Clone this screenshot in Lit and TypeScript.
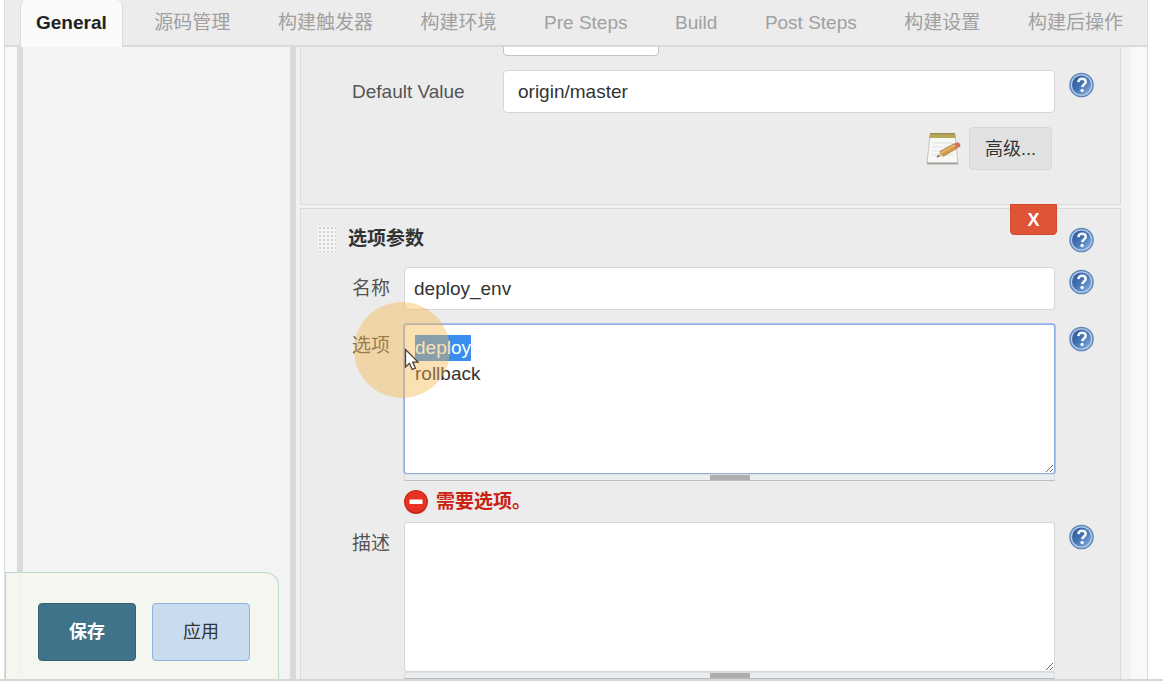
import { LitElement, html, css, svg } from "lit";
import { customElement, property, query } from "lit/decorators.js";
import { classMap } from "lit/directives/class-map.js";

@customElement("help-button")
class HelpButton extends LitElement {
  @property() topic = "";

  static styles = css`
    :host { display: block; width: 26px; height: 26px; }
    .help { display: block; width: 26px; height: 26px; padding: 0; border: 0; background: none; cursor: pointer; }
    .icon { display: block; }
  `;

  render() {
    return html`<button class="help" type="button" aria-label=${"帮助: " + this.topic}>
      <svg class="icon" width="26" height="26" viewBox="0 0 26 26" aria-hidden="true">
        <defs>
          <linearGradient id="g" x1="0" y1="0" x2="1" y2="1">
            <stop offset="0" stop-color="#2c5595" />
            <stop offset="0.5" stop-color="#4374b4" />
            <stop offset="1" stop-color="#8fb6e2" />
          </linearGradient>
        </defs>
        <circle cx="12.500" cy="13" r="12.300" fill="#6187ba" />
        <circle cx="12.500" cy="13" r="10.800" fill="#b4cbe8" />
        <circle cx="12.500" cy="13" r="9.500" fill="url(#g)" />
        <path d="M9.300 10.200c.2-2.300 1.700-3.500 3.800-3.500 2.200 0 3.600 1.200 3.600 3.100 0 2.600-3.300 2.700-3.500 5.400" fill="none" stroke="#f2f7fd" stroke-width="2.600" />
        <circle cx="13.100" cy="18.500" r="1.700" fill="#f2f7fd" />
      </svg>
    </button>`;
  }
}

const notepadIcon = svg`
  <path d="M4 4h25l3 28H1z" fill="#f8f8f6" stroke="#c4c4c0" stroke-width="1" />
  <path d="M1 31.500h31v2H1z" fill="#a5a59f" />
  <path d="M4 2h25l.8 5H3.400z" fill="#b8a85a" />
  <path d="M4 2h25v1.500H4z" fill="#9a8e50" />
  <path d="M6 12h21M6 16h21M5.500 20h22M5 24h23" stroke="#dfe1e2" stroke-width="1" />
  <path d="M10.500 26.500l4-6.500 4 5z" fill="#e0cc92" />
  <path d="M14 20.500L28 12.700l3 4.600-13.500 8z" fill="#d29a48" stroke="#a87b3c" stroke-width=".7" />
  <path d="M15 22l13.800-7.800" stroke="#edc47c" stroke-width="1.200" />
  <path d="M28 12.700l3.300-1.500q3.400.3 3 4.200l-3.300 1.900z" fill="#d4705e" />
  <path d="M10.500 26.500l1.500-2.400 1.700 1.500z" fill="#5d5840" />`;

const tabs = [
  "General", "源码管理", "构建触发器", "构建环境", "Pre Steps",
  "Build", "Post Steps", "构建设置", "构建后操作",
];

@customElement("app-root")
class AppRoot extends LitElement {
  @query("#choices") choices!: HTMLTextAreaElement;

  static styles = css`
    :host {
      display: flex;
      flex-direction: column;
      box-sizing: border-box;
      height: 100vh;
      padding-bottom: 6px;
      background: #fff;
      color: #333;
      font: 19px/26px "Liberation Sans", "Noto Sans CJK SC", sans-serif;
    }
    * { box-sizing: border-box; }
    button, input, textarea, select { font: inherit; color: inherit; margin: 0; }

    .viewport {
      flex: 1;
      min-height: 0;
      display: flex;
      padding: 0 15px 0 4px;
      border-bottom: 2px solid #d6d6d6;
    }
    .frame {
      position: relative;
      flex: 1;
      min-width: 0;
      display: flex;
      flex-direction: column;
      border: solid #dcdcdc;
      border-width: 0 1px;
      background: #f9f9f9;
    }

    .tabs {
      display: flex;
      flex: none;
      justify-content: space-between;
      height: 47px;
      padding: 0 8px 0 15px;
      background: #ececec;
      box-shadow: inset 0 -2px #dadada;
    }
    .tab {
      padding: 10px 16px 0;
      color: #a0a0a0;
      text-decoration: none;
      white-space: nowrap;
    }
    .tab.active {
      padding: 10px 15px 0;
      border: solid #dadada;
      border-width: 0 1px;
      border-radius: 6px 6px 0 0;
      background: #fafafa;
      color: #222;
      font-weight: bold;
    }

    .workspace {
      flex: 1;
      min-height: 0;
      display: flex;
      margin: 0 16px 0 12px;
      overflow: hidden;
    }
    .side {
      flex: none;
      width: 279px;
      border: solid #dadada;
      border-width: 0 6px;
      background: #f3f3f3;
    }
    .form {
      flex: 1;
      min-width: 0;
      padding: 0 10px 0 4px;
      background: #f1f1f1;
    }
    .panel {
      border: 1px solid #dadada;
      padding: 0 25px 0 51px;
      background: #ececec;
    }
    .panel + .panel { margin-top: 3px; }
    .scrolled { margin-top: -35px; padding-bottom: 34px; }
    .row {
      position: relative;
      display: grid;
      grid-template-columns: 52px minmax(0, 1fr) 26px;
      margin-bottom: 14px;
    }
    .wide { grid-template-columns: 151px minmax(0, 1fr) 26px; }
    .row help-button { margin-top: 2px; }
    .label { padding-top: 9px; color: #555; }
    .control { margin-right: 14px; min-width: 0; }
    .text, .area, .pick {
      display: block;
      width: 100%;
      border: 1px solid #d6d6d6;
      border-radius: 4px;
      background: #fff;
    }
    .text { height: 43px; padding: 0 9px; }
    .wide .text { padding: 0 14px; }
    .pick { width: 156px; height: 43px; appearance: none; border-color: #c4c4c4; }
    .area {
      height: 150px;
      padding: 10px;
      border-radius: 3px;
      resize: vertical;
      outline: none;
    }
    .area:focus { border-color: #8fafe2; box-shadow: 0 0 0 1px #a5c0ea; }
    .area::selection { background: #3a8eee; color: #fff; }
    .handle {
      display: flex;
      justify-content: center;
      height: 7px;
      border: 1px solid #ddd;
      border-bottom-color: #bdbdbd;
      background: #ebeef1;
    }
    .handle::before { content: ""; width: 40px; background: #adadad; }

    .advanced {
      display: flex;
      justify-content: flex-end;
      align-items: center;
      gap: 7px;
      margin-right: 43px;
    }
    .notepad { display: block; }
    .more {
      height: 43px;
      padding: 0 15px;
      border: 1px solid #d6d6d6;
      border-radius: 4px;
      background: #e1e1e1;
      font-size: 18px;
    }

    .heading {
      position: relative;
      display: flex;
      align-items: center;
      height: 58px;
      margin-left: -34px;
      padding-top: 2px;
    }
    .grip {
      width: 18px;
      height: 26px;
      margin-right: 12px;
      background: radial-gradient(circle, #cfcfcf 1px, #f5f5f5 1px) 0 0 / 4px 4px;
    }
    .title { flex: 1; margin: 0; font-size: 19px; line-height: 26px; color: #333; }
    .heading help-button { align-self: flex-end; margin-bottom: 14px; }
    .remove {
      position: absolute;
      top: -5px;
      right: 38px;
      width: 47px;
      height: 31px;
      padding: 0;
      border: 1px solid #cf4a2f;
      border-radius: 0 0 4px 4px;
      background: #df5336;
      color: #fff;
      font-size: 18px;
      font-weight: bold;
    }
    .error {
      display: flex;
      align-items: center;
      gap: 8px;
      height: 26px;
      margin: 8px 0 -7px;
      color: #cc2211;
      font-weight: bold;
    }

    .spot {
      position: absolute;
      left: 2px;
      top: -22px;
      width: 96px;
      height: 96px;
      border-radius: 50%;
      background: rgba(246, 180, 75, 0.42);
      pointer-events: none;
    }
    .pointer { position: absolute; left: 52px; top: 24px; pointer-events: none; }

    .actions {
      position: absolute;
      left: 0;
      bottom: 0;
      display: flex;
      gap: 16px;
      padding: 30px 28px 18px 32px;
      border: solid #bfd8ce;
      border-width: 1px 1px 0 1px;
      border-radius: 0 14px 0 0;
      background: rgba(243, 247, 239, 0.94);
    }
    .action {
      width: 98px;
      height: 58px;
      border: 1px solid #8fb4dc;
      border-radius: 4px;
      background: #c9dcef;
      font-size: 18px;
    }
    .save { border-color: #335f71; background: #3f7389; color: #fff; font-weight: bold; }
  `;

  firstUpdated() {
    this.choices.focus({ preventScroll: true });
    this.choices.setSelectionRange(0, 6);
  }

  render() {
    return html`
      <div class="viewport">
        <div class="frame">
          <nav class="tabs">
            ${tabs.map((name, i) => html`<a href="#" class=${classMap({ tab: true, active: i === 0 })}>${name}</a>`)}
          </nav>
          <main class="workspace">
            <div class="side"></div>
            <form class="form">
              <section class="panel scrolled">
                <div class="row wide">
                  <span></span>
                  <div class="control"><select class="pick" aria-label="Parameter Type"></select></div>
                </div>
                <div class="row wide">
                  <label class="label" for="default">Default Value</label>
                  <div class="control"><input class="text" id="default" value="origin/master" /></div>
                  <help-button topic="Default Value"></help-button>
                </div>
                <div class="advanced">
                  <svg class="notepad" width="36" height="36" viewBox="0 0 36 36" aria-hidden="true">${notepadIcon}</svg>
                  <button class="more" type="button">高级...</button>
                </div>
              </section>

              <section class="panel">
                <div class="heading">
                  <span class="grip"></span>
                  <h2 class="title">选项参数</h2>
                  <button class="remove" type="button">X</button>
                  <help-button topic="选项参数"></help-button>
                </div>
                <div class="row">
                  <label class="label" for="name">名称</label>
                  <div class="control"><input class="text" id="name" value="deploy_env" /></div>
                  <help-button topic="名称"></help-button>
                </div>
                <div class="row">
                  <label class="label" for="choices">选项</label>
                  <div class="control">
                    <textarea class="area" id="choices" spellcheck="false" .value=${"deploy\nrollback"}></textarea>
                    <div class="handle"></div>
                    <div class="error" role="alert">
                      <svg width="24" height="24" viewBox="0 0 24 24" aria-hidden="true">
                        <circle cx="12" cy="12" r="12" fill="#c9281b" />
                        <circle cx="12" cy="11.500" r="10.500" fill="#e63323" />
                        <rect x="5.500" y="9.500" width="13" height="4.500" rx=".5" fill="#fff" />
                      </svg>
                      <span>需要选项。</span>
                    </div>
                  </div>
                  <help-button topic="选项"></help-button>
                  <div class="spot"></div>
                  <svg class="pointer" width="16" height="24" viewBox="0 0 16 24" aria-hidden="true">
                    <path d="M1.500 1.500v17.500l4-3.700 2.700 6.200 3.200-1.400-2.700-6h5.300z" fill="#fff" stroke="#4a4038" stroke-width="1.300" />
                  </svg>
                </div>
                <div class="row">
                  <label class="label" for="description">描述</label>
                  <div class="control">
                    <textarea class="area" id="description"></textarea>
                    <div class="handle"></div>
                  </div>
                  <help-button topic="描述"></help-button>
                </div>
              </section>
            </form>
          </main>
          <div class="actions">
            <button class="action save" type="button">保存</button>
            <button class="action" type="button">应用</button>
          </div>
        </div>
      </div>
    `;
  }
}
